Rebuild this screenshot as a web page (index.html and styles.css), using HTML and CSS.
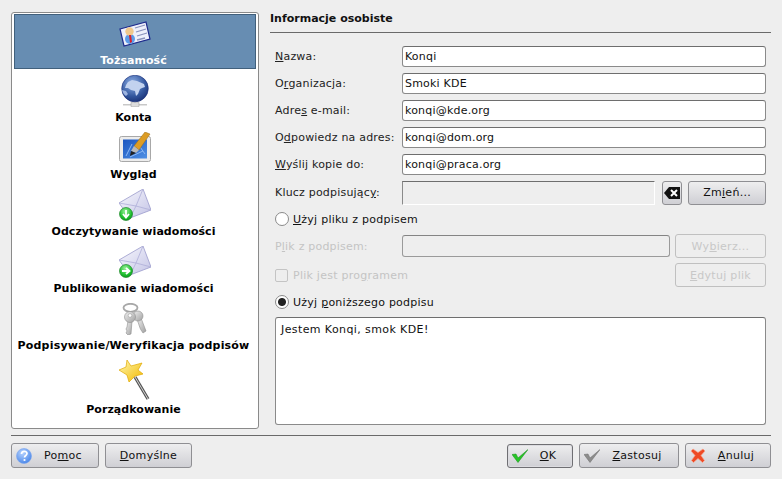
FILE: index.html
```html
<!DOCTYPE html>
<html lang="pl">
<head>
  <meta charset="UTF-8" />
  <title>Konfiguracja</title>
  <link rel="stylesheet" href="styles.css">
</head>
<body>
  <svg class="defs" width="0" height="0">
    <defs>
      <radialGradient id="globe" cx="0.4" cy="0.3" r="0.8"><stop offset="0" stop-color="#8fb0e6"/><stop offset="0.6" stop-color="#34589f"/><stop offset="1" stop-color="#14296e"/></radialGradient>
      <linearGradient id="mail" x1="0" y1="0" x2="1" y2="1"><stop offset="0" stop-color="#f8f8fd"/><stop offset="1" stop-color="#c4c4e6"/></linearGradient>
      <radialGradient id="green" cx="0.45" cy="0.3" r="0.8"><stop offset="0" stop-color="#9af09a"/><stop offset="0.6" stop-color="#20c030"/><stop offset="1" stop-color="#068a16"/></radialGradient>
      <linearGradient id="star" x1="0" y1="0" x2="1" y2="1"><stop offset="0" stop-color="#fff8b0"/><stop offset="1" stop-color="#f2b800"/></linearGradient>
      <radialGradient id="help" cx="0.4" cy="0.3" r="0.8"><stop offset="0" stop-color="#b5d2ff"/><stop offset="1" stop-color="#3f7fe6"/></radialGradient>
      <linearGradient id="screen" x1="0" y1="0" x2="1" y2="1"><stop offset="0" stop-color="#1a55c0"/><stop offset="1" stop-color="#4f90e4"/></linearGradient>
      <linearGradient id="steel" x1="0" y1="0" x2="1" y2="1"><stop offset="0" stop-color="#f0f0f0"/><stop offset="1" stop-color="#a0a0a0"/></linearGradient>
      <symbol id="mailbase" viewBox="0 0 32 32">
        <path d="M0 14 24 0l8 21-21 8z" fill="url(#mail)" stroke="#9a9acb" stroke-width=".8"/>
        <path d="M0 14l17 3 7-17M11 29l6-12 15 4" fill="none" stroke="#aeaed8" stroke-width=".8"/>
      </symbol>
    </defs>
  </svg>

  <div class="dialog">
    <div class="panes">
      <ul class="sidebar">
        <li class="nav-item selected">
          <svg class="nav-icon" viewBox="0 0 32 32">
            <path d="M1 10 27 3l4 17-26 7z" fill="#eef0fb" stroke="#1d2a8c" stroke-width="1.200"/>
            <path d="M16 9l10-3M17 13l10-3M18 17l10-3M18 21l8-2" stroke="#8a92bc" stroke-width="1.300"/>
            <circle cx="11" cy="20" r="5" fill="#5b9be8"/>
            <circle cx="10.500" cy="12.500" r="4.200" fill="#f0c88c"/>
            <path d="M10 16l2 0 1 7-2 1z" fill="#d8202c"/>
          </svg>
          <span>Tożsamość</span>
        </li>
        <li class="nav-item">
          <svg class="nav-icon" viewBox="0 0 32 32">
            <path d="M4 29h24v1.500H4z" fill="#c8c8c8"/>
            <rect x="12" y="27" width="8" height="5" rx="1" fill="#dcdcdc" stroke="#a0a0a0" stroke-width=".6"/>
            <circle cx="16" cy="13.500" r="13.300" fill="url(#globe)" stroke="#1b2f7a" stroke-width=".6"/>
            <path d="M9 7l4-2 5 1 7 3 1 3-3 1-2 1-2 5-2 2-1-5-4-1-3-2-3 0 1-3z" fill="#c2d2ef"/>
            <path d="M3 15l4 1 2 3-2 2c-2-1-3-3-4-6z" fill="#9db4e0"/>
          </svg>
          <span>Konta</span>
        </li>
        <li class="nav-item">
          <svg class="nav-icon" viewBox="0 0 32 32">
            <rect x=".5" y="4.500" width="31" height="25" rx="2" fill="#ececec" stroke="#a8a8a8"/>
            <rect x="4" y="7.500" width="24" height="19" fill="url(#screen)"/>
            <path d="M7 24 13 12M19 12l7 10M11 25l13-6" stroke="#8ab8f4" stroke-width="1"/>
            <path d="M15 14 26 0l5 2-11 16z" fill="#dc9c24" stroke="#9a6a12" stroke-width=".5"/>
            <path d="M15 14l5 4-3 3-5-2z" fill="#b8b8b8"/>
            <path d="M12 19l5 2-6 3z" fill="#222"/>
          </svg>
          <span>Wygląd</span>
        </li>
        <li class="nav-item">
          <svg class="nav-icon" viewBox="0 0 32 32">
            <use href="#mailbase"/>
            <circle cx="7" cy="25" r="6.500" fill="url(#green)" stroke="#0b7a18" stroke-width=".6"/>
            <path d="M7 21v7M4 25l3 3.500 3-3.500" fill="none" stroke="#fff" stroke-width="1.800"/>
          </svg>
          <span>Odczytywanie wiadomości</span>
        </li>
        <li class="nav-item">
          <svg class="nav-icon" viewBox="0 0 32 32">
            <use href="#mailbase"/>
            <circle cx="7" cy="25" r="6.500" fill="url(#green)" stroke="#0b7a18" stroke-width=".6"/>
            <path d="M3 25h7M7 22l3.500 3-3.500 3" fill="none" stroke="#fff" stroke-width="1.800"/>
          </svg>
          <span>Publikowanie wiadomości</span>
        </li>
        <li class="nav-item">
          <svg class="nav-icon" viewBox="0 0 32 32">
            <ellipse cx="11.500" cy="4.800" rx="7" ry="4" fill="none" stroke="#a8a8a8" stroke-width="1.800"/>
            <path d="M18 16l4-1 5 13-3 2-2-3-1-2z" fill="url(#steel)" stroke="#8e8e8e" stroke-width=".6"/>
            <circle cx="19" cy="13" r="5" fill="url(#steel)" stroke="#8e8e8e" stroke-width=".6"/>
            <path d="M9 18h4l-1 13-3 1-2-2 1-2-1-2 1-2z" fill="url(#steel)" stroke="#8e8e8e" stroke-width=".6"/>
            <circle cx="11" cy="14" r="5.500" fill="url(#steel)" stroke="#8e8e8e" stroke-width=".6"/>
            <circle cx="11" cy="12.500" r="1.800" fill="#fff" stroke="#999" stroke-width=".5"/>
          </svg>
          <span class="long">Podpisywanie/Weryfikacja podpisów</span>
        </li>
        <li class="nav-item last">
          <svg class="nav-icon wand" viewBox="0 0 32 40">
            <path d="M16 17 29 39" stroke="#555" stroke-width="3.200"/>
            <path d="M16 17 29 39" stroke="#d4d4d4" stroke-width="1"/>
            <path d="M8 0l4 6 11-3-4 7 5 4-8 2-6 6-2-7-8-5 7-3z" fill="url(#star)" stroke="#e0a800" stroke-width=".7"/>
          </svg>
          <span>Porządkowanie</span>
        </li>
      </ul>

      <div class="content">
        <h2 class="page-title">Informacje osobiste</h2>

        <div class="form-grid">
          <label><u>N</u>azwa:</label>
          <div class="input wide">Konqi</div>
          <label>O<u>r</u>ganizacja:</label>
          <div class="input wide">Smoki KDE</div>
          <label>Adre<u>s</u> e-mail:</label>
          <div class="input wide">konqi@kde.org</div>
          <label>O<u>d</u>powiedz na adres:</label>
          <div class="input wide">konqi@dom.org</div>
          <label><u>W</u>yślij kopie do:</label>
          <div class="input wide">konqi@praca.org</div>
        </div>

        <div class="key-row">
          <label>Klucz podpisując<u>y</u>:</label>
          <div class="key-field"></div>
          <button class="btn clear" type="button">
            <svg width="16" height="12" viewBox="0 0 16 12"><path d="M0 6 5 0h11v12H5z" fill="#111"/><path d="M7 3l6 6M13 3 7 9" stroke="#fff" stroke-width="2"/></svg>
          </button>
          <button class="btn change" type="button">Zm<u>i</u>eń...</button>
        </div>

        <div class="radio-row first"><span class="radio"></span><span><u>U</u>żyj pliku z podpisem</span></div>

        <div class="file-row disabled">
          <label>P<u>l</u>ik z podpisem:</label>
          <div class="file-field"></div>
          <button class="btn side" type="button">Wy<u>b</u>ierz...</button>
        </div>
        <div class="prog-row disabled">
          <span class="check"></span>
          <span class="prog-label">Plik jest pro<u>g</u>ramem</span>
          <button class="btn side" type="button"><u>E</u>dytuj plik</button>
        </div>

        <div class="radio-row"><span class="radio on"></span><span>Użyj <u>p</u>oniższego podpisu</span></div>
        <div class="signature">Jestem Konqi, smok KDE!</div>
      </div>
    </div>

    <hr class="sep">

    <div class="buttons">
      <button class="btn action pomoc" type="button">
        <svg width="16" height="16" viewBox="0 0 16 16"><circle cx="8" cy="8" r="7.500" fill="url(#help)" stroke="#7aa5ee" stroke-width=".6"/><path d="M5.500 6c0-3.500 5.500-3.500 5.500-.5 0 2-2.500 2-2.500 4" fill="none" stroke="#fff" stroke-width="1.700"/><circle cx="8.500" cy="12" r="1.100" fill="#fff"/></svg>
        <span>Po<u>m</u>oc</span>
      </button>
      <button class="btn action domyslne" type="button"><span><u>D</u>omyślne</span></button>
      <span class="spacer"></span>
      <button class="btn action ok default" type="button">
        <svg width="16" height="14" viewBox="0 0 16 14"><path d="M0 5.500l4-.5 2 4 10-8.500L6 13.500z" fill="#26c626" stroke="#128a12" stroke-width=".5"/></svg>
        <span><u>O</u>K</span>
      </button>
      <button class="btn action apply" type="button">
        <svg width="16" height="14" viewBox="0 0 16 14"><path d="M0 5.500l4-.5 2 4 10-8.500L6 13.500z" fill="#8c8c8c" stroke="#6a6a6a" stroke-width=".5"/></svg>
        <span><u>Z</u>astosuj</span>
      </button>
      <button class="btn action cancel" type="button">
        <svg width="16" height="15" viewBox="0 0 16 15"><path d="M3 1l5 3.500 5-3.500 2 2-4 4.500 3.500 5-2 2-4.500-4-4.500 4-2-2 3.500-5-4-4.500z" fill="#ee4a25" stroke="#f7a48c" stroke-width=".7"/></svg>
        <span><u>A</u>nuluj</span>
      </button>
    </div>
  </div>
</body>
</html>
```

FILE: styles.css
```css
* {
  box-sizing: border-box;
}
html, body {
  margin: 0;
  height: 479px;
  overflow: hidden;
}
body {
  background-color: #eeeeee;
  color: #111;
  font-family: "DejaVu Sans", sans-serif;
  font-size: 11px;
}
.defs {
  position: absolute;
}
.dialog {
  height: 479px;
  padding: 12px 11px 0;
}
.panes {
  display: flex;
  gap: 11px;
  height: 418px;
}

/* lista po lewej */
.sidebar {
  width: 248px;
  height: 417px;
  margin: 0;
  padding: 1px 2px;
  list-style: none;
  background-color: #fff;
  border: 1px solid #8a8a8a;
  border-radius: 3px;
}
.nav-item {
  display: flex;
  flex-direction: column;
  align-items: center;
  height: 57px;
  padding-top: 4px;
  font-weight: bold;
  color: #000;
  white-space: nowrap;
}
.nav-item span {
  margin: 4px 3px 0 0;
  line-height: 14px;
  letter-spacing: 0.05px;
}
.nav-item span.long {
  letter-spacing: 0.2px;
}
.nav-item.selected {
  height: 55px;
  margin-bottom: 2px;
  background-color: #678db2;
  border: 1px solid #41607c;
  padding-top: 4px;
  color: #fff;
}
.nav-item.selected span {
  margin-top: 3px;
}
.nav-icon {
  width: 32px;
  height: 32px;
  flex: none;
}
.nav-icon.wand {
  height: 40px;
}
.nav-item.last {
  height: 65px;
}
.nav-item.last span {
  margin-top: 3px;
}

/* prawa strona */
.content {
  flex: 1;
  min-width: 0;
  padding-right: 5px;
}
.page-title {
  margin: 0 -5px 0 0;
  height: 21px;
  font-size: 11px;
  font-weight: bold;
  line-height: 13px;
  color: #111;
  border-bottom: 1px solid #6a6a6a;
}
.form-grid {
  display: grid;
  grid-template-columns: 127px 1fr;
  row-gap: 6px;
  margin-top: 13px;
  padding-left: 5px;
  align-items: center;
}
.input, .signature {
  background-color: #fff;
  border: 1px solid #8a8a8a;
  border-top-color: #6e6e6e;
  border-radius: 3px;
  color: #111;
}
.input {
  height: 21px;
  padding: 0 2px;
  line-height: 20px;
  letter-spacing: 0.2px;
}
label {
  color: #222;
  letter-spacing: 0.2px;
}

.key-row, .file-row, .prog-row {
  display: flex;
  align-items: center;
  padding-left: 5px;
}
.key-row {
  margin-top: 5px;
  height: 25px;
}
.key-row label, .file-row label {
  width: 127px;
  flex: none;
}
.key-field {
  width: 254px;
  height: 24px;
  border-top: 1px solid #6e6e6e;
  border-left: 1px solid #8a8a8a;
  border-right: 1px solid #fff;
  border-bottom: 1px solid #fff;
}
.btn {
  font: inherit;
  color: #111;
  padding: 0;
  height: 24px;
  border: 1px solid #8f8f93;
  border-radius: 3px;
  background: linear-gradient(#eeeeef, #cfcfd4);
  letter-spacing: 0.3px;
}
.clear {
  width: 20px;
  margin-left: 7px;
  display: flex;
  align-items: center;
  justify-content: center;
}
.change {
  width: 78px;
  margin-left: 6px;
}

.radio-row {
  display: flex;
  align-items: center;
  gap: 4px;
  height: 14px;
  padding-left: 5px;
  margin-top: 8px;
  letter-spacing: 0.25px;
}
.radio-row.first {
  margin-top: 7px;
}
.radio {
  width: 14px;
  height: 14px;
  border: 1px solid #8a8a8a;
  border-radius: 50%;
  background-color: #fff;
  flex: none;
}
.radio.on {
  background: radial-gradient(circle, #222 0 3.5px, #fff 4.5px);
}

.disabled, .disabled label {
  color: #c4c4c4;
}
.file-row {
  margin-top: 8px;
  height: 24px;
}
.file-field {
  width: 268px;
  height: 22px;
  border: 1px solid #9a9a9a;
  border-top-color: #848484;
  border-radius: 3px;
}
.side {
  width: 91px;
  margin-left: 5px;
  color: #c8c8c8;
  background: #eeeeee;
  border-color: #c0c0c0;
}
.prog-row {
  margin-top: 5px;
  height: 24px;
}
.check {
  width: 13px;
  height: 13px;
  border: 1px solid #c4c4c4;
  border-radius: 2px;
  flex: none;
}
.prog-label {
  margin-left: 5px;
  flex: 1;
  letter-spacing: 0.25px;
}
.signature {
  height: 108px;
  margin: 8px 0 0 5px;
  padding: 5px 5px;
  line-height: 14px;
  letter-spacing: 0.4px;
}

.sep {
  margin: 5px 0 0;
  border: 0;
  border-top: 1px solid #6a6a6a;
}

/* przyciski na dole */
.buttons {
  display: flex;
  align-items: center;
  margin-top: 7px;
}
.spacer {
  flex: 1;
}
.action {
  display: flex;
  align-items: center;
  height: 25px;
  padding: 0 4px;
}
.action span {
  flex: 1;
  text-align: center;
}
.pomoc { width: 88px; }
.domyslne { width: 87px; margin-left: 6px; }
.ok { width: 66px; height: 24px; }
.apply { width: 100px; margin-left: 6px; }
.cancel { width: 86px; margin-left: 6px; }
.default {
  border-color: #6f6f73;
  box-shadow: inset 0 0 0 1px #dcdce0;
}
```
